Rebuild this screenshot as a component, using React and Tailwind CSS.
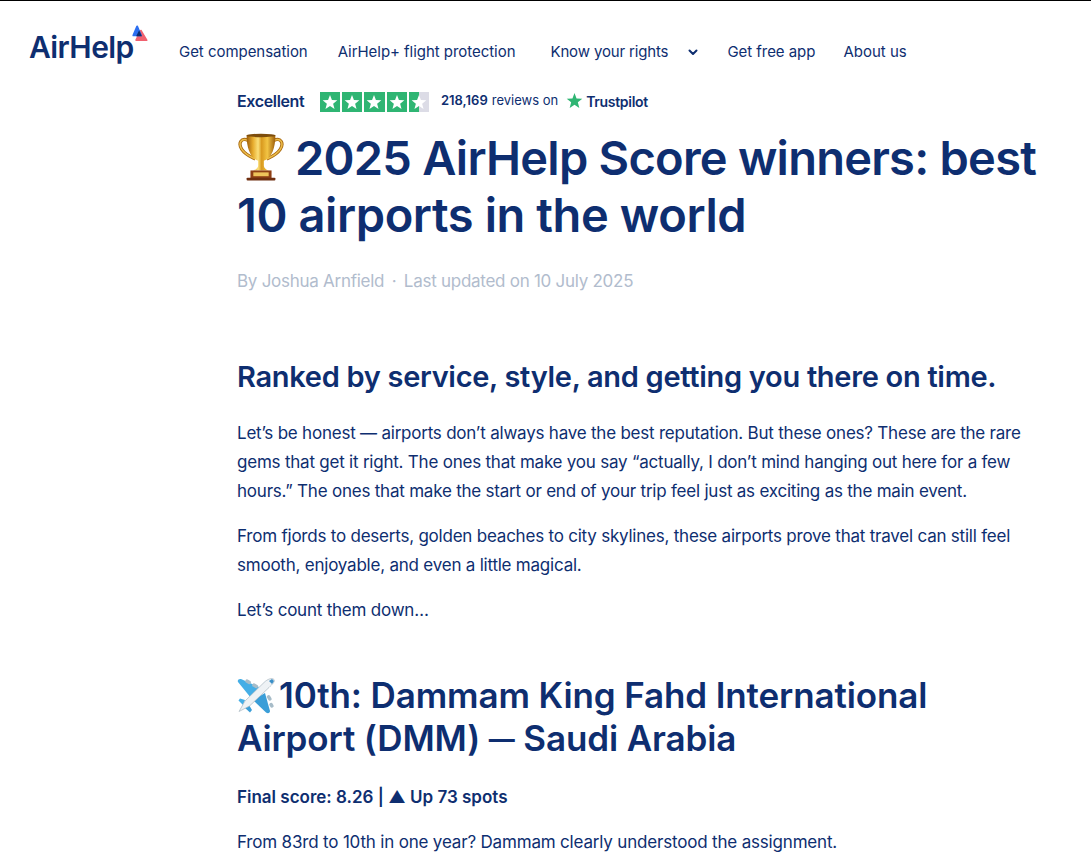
const Star = ({ className = "w-[16px] h-[16px]", fill = "#fff" }) => (
  <svg viewBox="0 0 24 24" className={className}>
    <path fill={fill} d="M12 1.5l2.9 7.6 8.1.4-6.3 5.1 2.1 7.9L12 18.1l-6.8 4.4 2.1-7.9L1 9.5l8.1-.4z" />
  </svg>
);

const Logo = () => (
  <div className="flex items-start w-[150px] ml-[29px]">
    <span className="text-[30px] leading-[36px] font-semibold tracking-[-0.6px] text-[#0e2e70] mt-[28px]">AirHelp</span>
    <svg viewBox="0 0 18 20" className="w-[17px] h-[19px] mt-[23px] -ml-[3px]">
      <path d="M10.5 7 L16.5 17 L5.5 17Z" fill="#f0616f" strokeLinejoin="round" stroke="#f0616f" strokeWidth="2" />
      <path d="M6.5 2.5 L10.5 12 L2.5 12Z" fill="#2d6ff0" strokeLinejoin="round" stroke="#2d6ff0" strokeWidth="2" />
      <path d="M8.6 6.5 L11.6 13 L5.4 13Z" fill="#0e2e70" />
    </svg>
  </div>
);

const Trophy = () => (
  <svg viewBox="0 0 48 50" className="w-[48px] h-[48px] shrink-0 mr-[10px]">
    <defs>
      <linearGradient id="gold" x1="0" x2="1" y1="0" y2="0">
        <stop offset="0" stopColor="#9c5c0a" />
        <stop offset="0.22" stopColor="#e7ab2c" />
        <stop offset="0.4" stopColor="#fbe07a" />
        <stop offset="0.52" stopColor="#d99a1f" />
        <stop offset="0.72" stopColor="#f2c444" />
        <stop offset="1" stopColor="#9c5c0a" />
      </linearGradient>
    </defs>
    <path d="M11 8 C3 4 0 11 4 17 C8 23 14 25 18 27" fill="none" stroke="#a9690f" strokeWidth="3.4" />
    <path d="M11 8 C3 4 0 11 4 17 C8 23 14 25 18 27" fill="none" stroke="#ecbd4a" strokeWidth="1.6" />
    <path d="M37 8 C45 4 48 11 44 17 C40 23 34 25 30 27" fill="none" stroke="#a9690f" strokeWidth="3.4" />
    <path d="M37 8 C45 4 48 11 44 17 C40 23 34 25 30 27" fill="none" stroke="#ecbd4a" strokeWidth="1.6" />
    <path d="M9 2 H39 C39 16 35 26 27 29 V34 C27 36 29 38 32 39 H16 C19 38 21 36 21 34 V29 C13 26 9 16 9 2Z" fill="url(#gold)" />
    <ellipse cx="24" cy="2.5" rx="15" ry="1.8" fill="#7d4d0c" />
    <rect x="13" y="39" width="22" height="8" fill="#8f3f14" />
    <rect x="16" y="41" width="16" height="4" fill="#eec35a" />
    <rect x="9" y="46.5" width="30" height="3" rx="1" fill="#6f2f10" />
  </svg>
);

const Plane = () => (
  <svg viewBox="0 0 40 38" className="w-[40px] h-[38px] shrink-0 mr-[3px] -ml-[1px]">
    <path d="M23 10 L5 2 C3 1.5 1 3 2 5 L15 21Z" fill="#45aee6" />
    <path d="M29 16 L34 34 C34 36 32 37 30 35.5 L17 23Z" fill="#3a9ed8" />
    <path d="M9 23 L4 21.5 L2.5 23.5 L7 28 Z" fill="#45aee6" />
    <path d="M13 28 L16 33 L14 35.5 L9 31 Z" fill="#3a9ed8" />
    <rect x="9" y="3" width="6" height="3.5" rx="1.5" transform="rotate(30 12 5)" fill="#a7bcc8" />
    <rect x="16" y="7" width="6" height="3.5" rx="1.5" transform="rotate(30 19 9)" fill="#a7bcc8" />
    <rect x="30" y="19" width="6" height="3.5" rx="1.5" transform="rotate(60 33 21)" fill="#a7bcc8" />
    <rect x="33" y="26" width="5" height="3.5" rx="1.5" transform="rotate(60 35 28)" fill="#a7bcc8" />
    <path d="M38 2.5 C36 0.5 31.5 2 28 5.5 L9 24 L3 34.5 L13.5 29 L33 10.5 C36.5 7 39.5 4.5 38 2.5Z" fill="#eef2f5" stroke="#a9b8c2" strokeWidth="0.7" />
    <path d="M33 4 L36 7 L38 4 L36 2Z" fill="#3a8fc7" />
  </svg>
);

const navClass = "text-[15px] leading-[20px] text-[#0e2e70] tracking-[-0.04px]";

export default function App() {
  return (
    <div className="min-h-[861px] bg-white border-t border-black font-['Inter',sans-serif] text-[#0e2e70] overflow-hidden">
      <header className="flex items-start h-[85px]">
        <Logo />
        <nav className="flex items-center mt-[41px]">
          <span className={navClass}>Get compensation</span>
          <span className={`${navClass} ml-[30px]`}>AirHelp+ flight protection</span>
          <span className="text-[15px] leading-[20px] tracking-[-0.15px] ml-[35px]">Know your rights</span>
          <svg viewBox="0 0 12 12" className="w-[12px] h-[12px] ml-[19px]" fill="none" stroke="#0e2e70" strokeWidth="2" strokeLinecap="round" strokeLinejoin="round">
            <path d="M2.5 4.5 L6 8 L9.5 4.5" />
          </svg>
          <span className={`${navClass} ml-[28px]`}>Get free app</span>
          <span className="text-[15px] leading-[20px] ml-[28px]">About us</span>
        </nav>
      </header>

      <main className="ml-[237px] w-[810px]">
        <div className="flex items-center h-[32px] -mt-[1px]">
          <span className="text-[16px] font-semibold tracking-[-0.35px] w-[83px]">Excellent</span>
          <div className="flex gap-[2px] mt-[1px]">
            {[0, 1, 2, 3].map((i) => (
              <div key={i} className="w-[20.2px] h-[20px] bg-[#2fb573] flex items-center justify-center"><Star /></div>
            ))}
            <div className="w-[20.2px] h-[20px] bg-[linear-gradient(90deg,#2fb573_50%,#dcdce6_50%)] flex items-center justify-center"><Star /></div>
          </div>
          <span className="text-[13px] font-semibold ml-[12px]">218,169</span>
          <span className="text-[13px] ml-[4px]">reviews on</span>
          <Star className="w-[17px] h-[17px] ml-[8px] mb-[2px]" fill="#2fb573" />
          <span className="text-[14px] font-semibold tracking-[-0.3px] ml-[3px]">Trustpilot</span>
        </div>

        <h1 className="text-[47px] leading-[57px] font-semibold mt-[12px] tracking-[-0.75px]">
          <span className="inline-flex align-[-6px]"><Trophy /></span>2025 AirHelp Score winners: best <span className="tracking-[-0.4px]">10 airports in the world</span>
        </h1>

        <p className="text-[17px] leading-[24px] text-[#b1bccd] mt-[26px] tracking-[-0.27px]">By Joshua Arnfield <span className="mx-[3px]">·</span> Last updated on 10 July 2025</p>

        <h2 className="text-[29px] leading-[38px] font-semibold mt-[65px] tracking-[-0.3px]">Ranked by service, style, and getting you there on time.</h2>

        <p className="text-[17px] leading-[29px] mt-[23px] tracking-[-0.22px]">Let’s be honest — airports don’t always have the best reputation. But these ones? These are the rare gems that get it right. The ones that make you say “actually, I don’t mind hanging out here for a few hours.” The ones that make the start or end of your trip feel just as exciting as the main event.</p>
        <p className="text-[17px] leading-[29px] mt-[16px] tracking-[-0.22px]">From fjords to deserts, golden beaches to city skylines, these airports prove that travel can still feel smooth, enjoyable, and even a little magical.</p>
        <p className="text-[17px] leading-[29px] mt-[16px] tracking-[-0.22px]">Let’s count them down…</p>

        <h2 className="text-[35px] leading-[43px] font-semibold mt-[49px] tracking-[-0.12px]">
          <span className="inline-flex align-[-7px] leading-[0px]"><Plane /></span>10th: Dammam King Fahd International Airport (DMM) <span className="text-[26px] font-bold leading-[0px] align-[3px]">—</span> Saudi Arabia
        </h2>

        <p className="text-[17px] leading-[29px] font-semibold mt-[23px]">Final score: 8.26 | <span className="text-[17px]">▲</span> Up 73 spots</p>
        <p className="text-[17px] leading-[29px] mt-[16px] tracking-[-0.18px]">From 83rd to 10th in one year? Dammam clearly understood the assignment.</p>
      </main>
    </div>
  );
}
